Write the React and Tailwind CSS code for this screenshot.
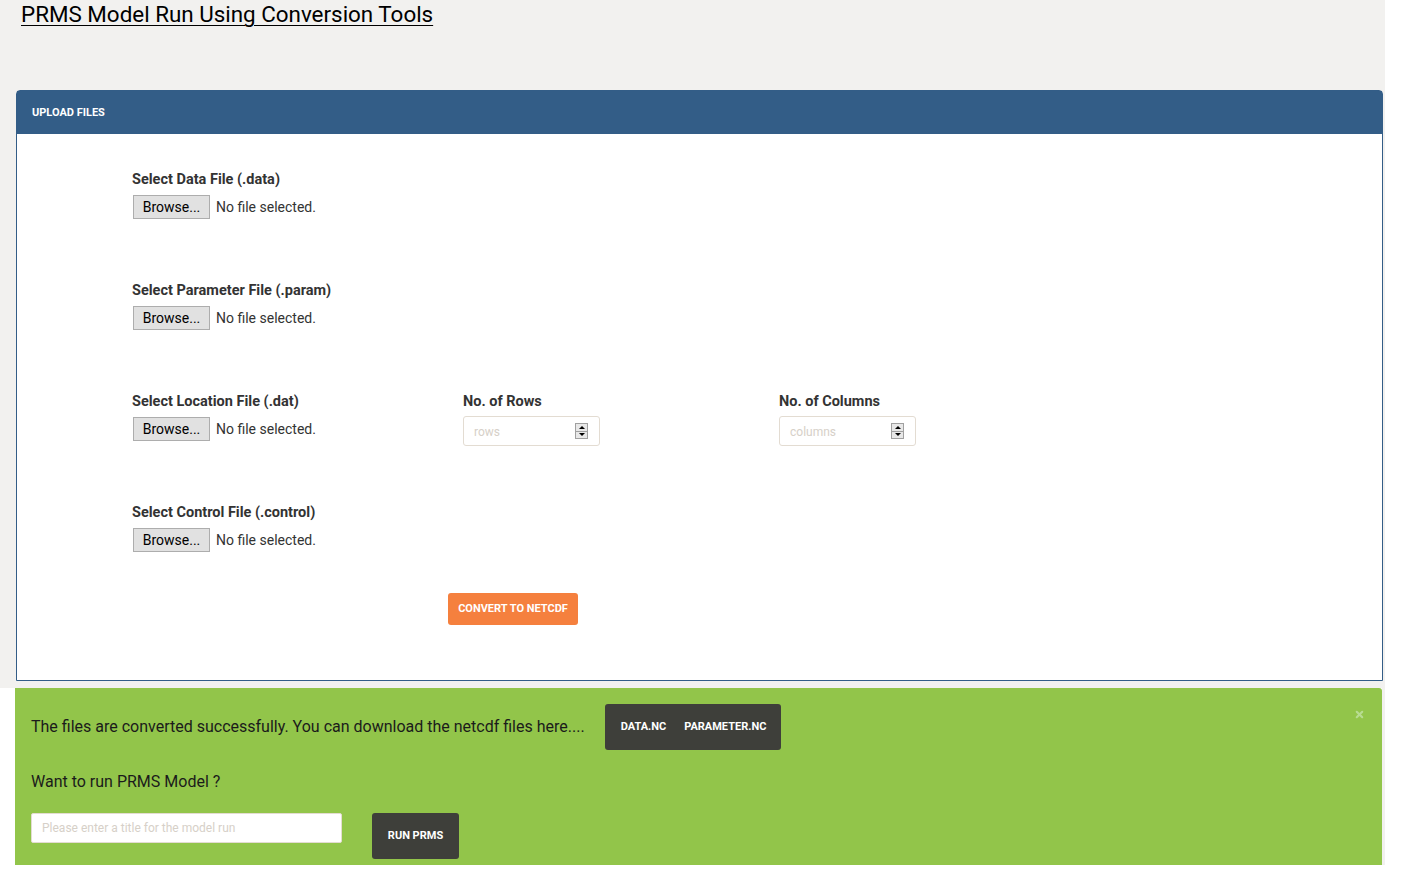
import { X } from "lucide-react"

const font = { fontFamily: "Roboto, 'Liberation Sans', sans-serif" }

function FilePick({ label }) {
  return (
    <div>
      <div className="text-[14.5px] leading-5 font-bold text-[#333]">{label}</div>
      <div className="mt-[5px] flex items-center">
        <div className="ml-px h-6 w-[77px] flex items-center justify-center bg-[#e1e1e1] border border-[#adadad] text-[14px] text-black">
          Browse...
        </div>
        <span className="ml-[6px] text-[14px] text-[#333]">No file selected.</span>
      </div>
    </div>
  )
}

function Spinner() {
  return (
    <div className="w-[13px] h-4 flex flex-col border border-[#a0a0a0] bg-[#e8e8e8]">
      <div className="flex-1 flex items-center justify-center border-b border-[#a0a0a0]">
        <div className="w-0 h-0 border-l-[3px] border-r-[3px] border-b-[3px] border-l-transparent border-r-transparent border-b-black" />
      </div>
      <div className="flex-1 flex items-center justify-center">
        <div className="w-0 h-0 border-l-[3px] border-r-[3px] border-t-[3px] border-l-transparent border-r-transparent border-t-black" />
      </div>
    </div>
  )
}

function NumField({ label, placeholder }) {
  return (
    <div>
      <div className="text-[14.5px] leading-5 font-bold text-[#333]">{label}</div>
      <div className="mt-[4px] w-[137px] h-[30px] border border-[#e3dcd2] rounded-[3px] bg-white flex items-center pl-[10px] pr-[11px]">
        <span className="flex-1 text-[12px] pt-[2px] text-[#d6d0c8]">{placeholder}</span>
        <Spinner />
      </div>
    </div>
  )
}

export default function App() {
  return (
    <div style={font} className="w-[1401px] h-[878px] bg-white overflow-hidden">
      <div className="w-[1385px] bg-[#f2f1ef]">
        <div className="pl-[21px] h-[90px]">
          <h1 className="text-[22.4px] leading-[28px] text-black underline underline-offset-[3px] decoration-1">
            PRMS Model Run Using Conversion Tools
          </h1>
        </div>

        <div className="ml-4 w-[1367px] rounded-t-[4px] border border-[#335d87] bg-white">
          <div className="h-[43px] bg-[#335d87] flex items-center pl-[15px] pt-[2px]">
            <span className="text-[11px] font-bold text-white">UPLOAD FILES</span>
          </div>
          <div className="pl-[115px] pt-[36px] h-[546px]">
            <FilePick label="Select Data File (.data)" />
            <div className="mt-[62px]">
              <FilePick label="Select Parameter File (.param)" />
            </div>
            <div className="mt-[62px] flex">
              <div className="w-[331px]">
                <FilePick label="Select Location File (.dat)" />
              </div>
              <div className="w-[316px]">
                <NumField label="No. of Rows" placeholder="rows" />
              </div>
              <NumField label="No. of Columns" placeholder="columns" />
            </div>
            <div className="mt-[57px]">
              <FilePick label="Select Control File (.control)" />
            </div>
            <div className="mt-[41px] ml-[316px]">
              <button className="h-8 w-[130px] rounded-[3px] bg-[#f5803e] text-white text-[11px] font-bold">
                CONVERT TO NETCDF
              </button>
            </div>
          </div>
        </div>

        <div className="h-[7px]" />
      </div>

      <div className="flex w-[1385px] h-[177px]">
        <div className="w-[15px] bg-white" />
        <div className="relative flex-1 bg-[#92c54a] rounded-tr-[3px] pl-4 pt-4">
          <X className="absolute right-[17px] top-[21px] w-[11px] h-[11px] text-[#b8dc92]" strokeWidth={4.5} />
          <div className="flex items-center">
            <span className="text-[16px] text-[#1b1b1b]">
              The files are converted successfully. You can download the netcdf files here....
            </span>
            <div className="ml-[20px] h-[46px] w-[176px] rounded-[3px] bg-[#3e3f3a] flex items-center pl-[16px] gap-[18px] text-[11px] font-bold text-white">
              <span>DATA.NC</span>
              <span>PARAMETER.NC</span>
            </div>
          </div>
          <div className="mt-[20px] text-[16px] text-[#1b1b1b]">Want to run PRMS Model ?</div>
          <div className="mt-[19px] flex items-start">
            <div className="w-[311px] h-[30px] bg-white border border-[#e3dcd2] rounded-[2px] flex items-center pl-[10px]">
              <span className="text-[12px] text-[#d6d0c8]">Please enter a title for the model run</span>
            </div>
            <button className="ml-[30px] h-[46px] w-[87px] rounded-[3px] bg-[#3e3f3a] text-white text-[11px] font-bold flex items-center justify-center">
              RUN PRMS
            </button>
          </div>
        </div>
        <div className="w-[3px] bg-[#f2f1ef]" />
      </div>
    </div>
  )
}
